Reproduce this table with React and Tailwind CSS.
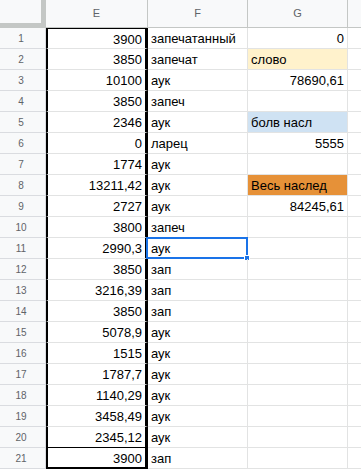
import React from "react";

const rows = [
  { e: "3900", f: "запечатанный", g: "0", gAlign: "right" },
  { e: "3850", f: "запечат", g: "слово", gBg: "bg-[#fff2cc]" },
  { e: "10100", f: "аук", g: "78690,61", gAlign: "right" },
  { e: "3850", f: "запеч" },
  { e: "2346", f: "аук", g: "болв насл", gBg: "bg-[#cfe2f3]" },
  { e: "0", f: "ларец", g: "5555", gAlign: "right" },
  { e: "1774", f: "аук" },
  { e: "13211,42", f: "аук", g: "Весь наслед", gBg: "bg-[#e69138]" },
  { e: "2727", f: "аук", g: "84245,61", gAlign: "right" },
  { e: "3800", f: "запеч" },
  { e: "2990,3", f: "аук", selected: true },
  { e: "3850", f: "зап" },
  { e: "3216,39", f: "зап" },
  { e: "3850", f: "зап" },
  { e: "5078,9", f: "аук" },
  { e: "1515", f: "аук" },
  { e: "1787,7", f: "аук" },
  { e: "1140,29", f: "аук" },
  { e: "3458,49", f: "аук" },
  { e: "2345,12", f: "аук" },
  { e: "3900", f: "зап" },
];

const App = () => {
  return (
    <div className="w-[361px] h-[471px] overflow-hidden bg-white text-[13px] text-black font-['Liberation_Sans',Arial,sans-serif]">
      {/* column headers */}
      <div className="flex h-[28px] bg-[#f8f9fa] text-[11px] text-[#5f6368]">
        <div className="w-[46px] shrink-0 border-r-[5px] border-b-[5px] border-[#c4c7c5]" />
        <div className="w-[102px] shrink-0 flex items-center justify-center border-r border-b border-[#c4c7c5]">
          E
        </div>
        <div className="w-[100px] shrink-0 flex items-center justify-center border-r border-b border-[#c4c7c5]">
          F
        </div>
        <div className="w-[100px] shrink-0 flex items-center justify-center border-r border-b border-[#c4c7c5]">
          G
        </div>
        <div className="flex-1 border-b border-[#c4c7c5]" />
      </div>

      {rows.map((row, i) => {
        const n = i + 1;
        let eBorder = "border-b border-b-[#e2e3e3]";
        if (n === 20) eBorder = "border-b border-b-black";
        if (n === 21) eBorder = "border-b-2 border-b-black";
        return (
          <div key={n} className="flex h-[21px]">
            <div className="w-[46px] shrink-0 flex items-center justify-center pr-[3px] pt-[1px] bg-[#f8f9fa] border-r border-b border-[#dadce0] text-[10px] text-[#5f6368]">
              {n}
            </div>
            <div
              className={`w-[102px] shrink-0 flex items-center justify-end pr-[3px] pt-[2px] border-l-2 border-r-[3px] border-l-black border-r-black ${eBorder} ${
                n === 1 ? "border-t border-t-black" : ""
              }`}
            >
              {row.e}
            </div>
            <div className="relative w-[100px] shrink-0 flex items-center pl-[3px] pt-[2px] border-r border-b border-[#e2e3e3] whitespace-nowrap">
              {row.f}
              {row.selected && (
                <div className="absolute -left-[2px] -top-[1px] -right-[1px] -bottom-[1px] border-2 border-[#1a73e8]">
                  <div className="absolute -right-[4px] -bottom-[4px] w-[6px] h-[6px] bg-[#1a73e8] border border-white" />
                </div>
              )}
            </div>
            <div
              className={`w-[100px] shrink-0 flex items-center px-[3px] pt-[2px] border-r border-b border-[#e2e3e3] whitespace-nowrap ${
                row.gAlign === "right" ? "justify-end" : "justify-start"
              } ${row.gBg || ""}`}
            >
              {row.g}
            </div>
            <div className="flex-1 border-b border-[#e2e3e3]" />
          </div>
        );
      })}
    </div>
  );
};

export default App;
